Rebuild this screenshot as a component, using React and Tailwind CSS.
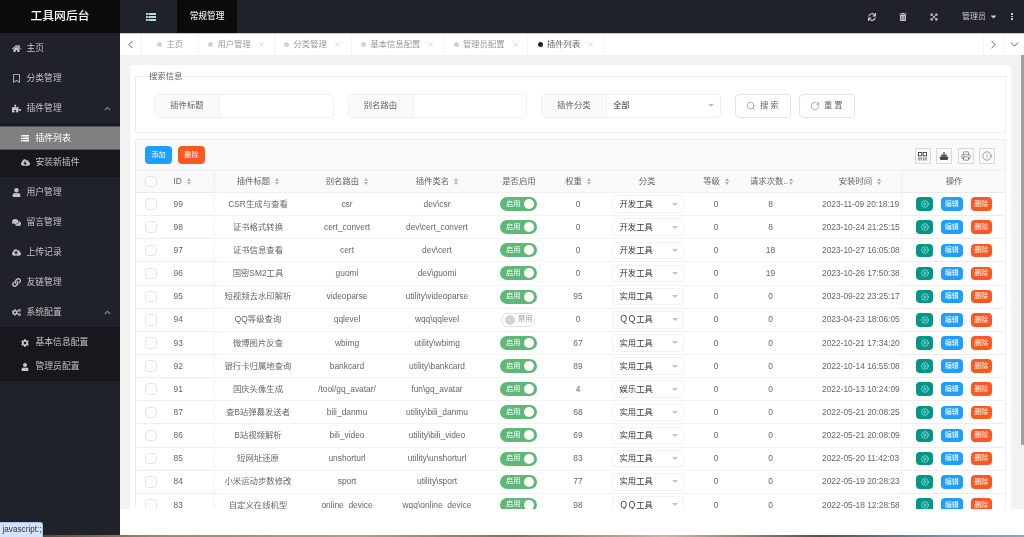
import React from "react";
import { FaHome, FaRegBookmark, FaPuzzlePiece, FaCloudDownloadAlt, FaUser, FaComments, FaCloudUploadAlt, FaLink, FaCogs, FaCog, FaSync, FaTrashAlt, FaExpandArrowsAlt, FaCaretDown, FaChevronUp } from "react-icons/fa";
import { ChevronLeft, ChevronRight, ChevronDown, Search, RotateCw, Printer, Info, CirclePlay, X } from "lucide-react";

const rows = [
  [99, "CSR生成与查看", "csr", "dev\\csr", 0, "开发工具", 8, "2023-11-09 20:18:19"],
  [98, "证书格式转换", "cert_convert", "dev\\cert_convert", 0, "开发工具", 8, "2023-10-24 21:25:15"],
  [97, "证书信息查看", "cert", "dev\\cert", 0, "开发工具", 18, "2023-10-27 16:05:08"],
  [96, "国密SM2工具", "guomi", "dev\\guomi", 0, "开发工具", 19, "2023-10-26 17:50:38"],
  [95, "短视频去水印解析", "videoparse", "utility\\videoparse", 95, "实用工具", 0, "2023-09-22 23:25:17"],
  [94, "QQ等级查询", "qqlevel", "wqq\\qqlevel", 0, "ＱＱ工具", 0, "2023-04-23 18:06:05", true],
  [93, "微博图片反查", "wbimg", "utility\\wbimg", 67, "实用工具", 0, "2022-10-21 17:34:20"],
  [92, "银行卡归属地查询", "bankcard", "utility\\bankcard", 89, "实用工具", 0, "2022-10-14 16:55:08"],
  [91, "国庆头像生成", "/tool/gq_avatar/", "fun\\gq_avatar", 4, "娱乐工具", 0, "2022-10-13 10:24:09"],
  [87, "查B站弹幕发送者", "bili_danmu", "utility\\bili_danmu", 68, "实用工具", 0, "2022-05-21 20:08:25"],
  [86, "B站视频解析", "bili_video", "utility\\bili_video", 69, "实用工具", 0, "2022-05-21 20:08:09"],
  [85, "短网址还原", "unshorturl", "utility\\unshorturl", 83, "实用工具", 0, "2022-05-20 11:42:03"],
  [84, "小米运动步数修改", "sport", "utility\\sport", 77, "实用工具", 0, "2022-05-19 20:28:23"],
  [83, "自定义在线机型", "online_device", "wqq\\online_device", 98, "ＱＱ工具", 0, "2022-05-18 12:28:58"],
];

const tabs = [
  ["主页", 57, false],
  ["用户管理", 76, true],
  ["分类管理", 77, true],
  ["基本信息配置", 92.5, true],
  ["管理员配置", 84, true],
  ["插件列表", 76, true, true],
];

function ListIcon({ size = 10 }) {
  return (
    <svg width={size} height={size * 0.8} viewBox="0 0 10 8" fill="currentColor">
      <path d="M0 0h1.8v2H0zM2.4 0H10v2H2.4zM0 3h1.8v2H0zM2.4 3H10v2H2.4zM0 6h1.8v2H0zM2.4 6H10v2H2.4z" />
    </svg>
  );
}

function MenuItem({ icon: Icon, label, open, size = 9 }) {
  return (
    <div className="flex h-[30px] items-center pl-3 pr-[9px] pt-px text-[8.8px] text-[#c3c4c6]">
      <span className="flex w-[14.5px] shrink-0 items-center"><Icon size={size} /></span>
      <span className="flex-1">{label}</span>
      {open && <FaChevronUp size={7} className="text-[#8b8d92]" />}
    </div>
  );
}

function SubItem({ icon: Icon, label, active, size = 8 }) {
  return (
    <div className={`flex h-6 items-center pl-[21px] pt-px text-[8.8px] ${active ? "border-y border-[#555] bg-[#808080] text-white" : "text-[#c3c4c6]"}`}>
      <span className="flex w-[14.5px] shrink-0 items-center"><Icon size={size} /></span>
      {label}
    </div>
  );
}

function Sort({ gap = "ml-[5px]" }) {
  return (
    <span className={`${gap} inline-flex flex-col gap-px align-middle`}>
      <span className="h-0 w-0 border-x-[2.5px] border-b-[3px] border-x-transparent border-b-[#b2b2b2]" />
      <span className="h-0 w-0 border-x-[2.5px] border-t-[3px] border-x-transparent border-t-[#b2b2b2]" />
    </span>
  );
}

function Field({ label, children }) {
  return (
    <div className="flex h-6 w-[179.5px] shrink-0 rounded-sm border border-[#f0f0f0] bg-white text-[8.4px]">
      <div className="flex w-[65px] shrink-0 items-center justify-center border-r border-[#f0f0f0] bg-[#fafafa] text-[#666]">{label}</div>
      {children}
    </div>
  );
}

function Head({ className, children, sort = true, gap }) {
  return (
    <div className={`flex h-full items-center justify-center whitespace-nowrap ${className}`}>
      {children}{sort && <Sort gap={gap} />}
    </div>
  );
}

function Row({ r }) {
  const [id, title, alias, cls, weight, cat, count, time, off] = r;
  return (
    <div className="flex h-[23.15px] items-center border-b border-[#f4f4f4] text-[8.4px] text-[#666]">
      <div className="relative z-10 flex h-full w-[77px] shrink-0 items-center pl-[9px] shadow-[2px_0_3px_rgba(0,0,0,0.04)]">
        <span className="h-[11.5px] w-[11.5px] rounded-sm border border-[#e4e4e4] bg-white" />
        <span className="ml-[17px]">{id}</span>
      </div>
      <div className="w-[90px] shrink-0 whitespace-nowrap text-center">{title}</div>
      <div className="w-[88px] shrink-0 whitespace-nowrap text-center">{alias}</div>
      <div className="w-[92px] shrink-0 whitespace-nowrap text-center">{cls}</div>
      <div className="flex w-[72px] shrink-0 justify-center pr-[2px]">
        {off ? (
          <span className="flex h-[14px] w-[34px] items-center rounded-full border border-[#e2e2e2] bg-white pl-[3px] text-[7.2px] text-[#999]">
            <span className="mr-[3px] h-[10px] w-[10px] rounded-full bg-[#d2d2d2]" />禁用
          </span>
        ) : (
          <span className="flex h-[14px] w-[37px] items-center justify-between rounded-full bg-[#5fb878] pl-[6.5px] pr-[3px] text-[7.2px] text-white">
            启用<span className="h-[10px] w-[10px] rounded-full bg-white" />
          </span>
        )}
      </div>
      <div className="w-[46px] shrink-0 text-center">{weight}</div>
      <div className="w-[92px] shrink-0 pl-[11px]">
        <div className="flex h-[17.5px] w-[72px] items-center justify-between rounded-sm border border-[#f2f2f2] bg-white pl-[6.5px] pr-[5px] text-[#333]">
          <span className="whitespace-nowrap">{cat}</span>
          <span className="h-0 w-0 border-x-[3px] border-t-[3px] border-x-transparent border-t-[#c2c2c2]" />
        </div>
      </div>
      <div className="w-[46px] shrink-0 text-center">0</div>
      <div className="w-[63px] shrink-0 text-center">{count}</div>
      <div className="w-[101px] shrink-0 whitespace-nowrap pl-[20px]">{time}</div>
      <div className="relative z-10 flex h-full flex-1 items-center bg-white pl-[13px] shadow-[-2px_0_3px_rgba(0,0,0,0.04)]">
        <span className="flex h-[13.5px] w-[17px] items-center justify-center rounded-sm bg-[#009688] text-white"><CirclePlay size={8} strokeWidth={1.5} /></span>
        <span className="ml-2 flex h-[13.5px] w-[21.5px] items-center justify-center rounded-sm bg-[#1e9fff] text-[7px] text-white">编辑</span>
        <span className="ml-2 flex h-[13.5px] w-[21.5px] items-center justify-center rounded-sm bg-[#ff5722] text-[7px] text-white">删除</span>
      </div>
    </div>
  );
}

function ToolBtn({ children }) {
  return <span className="flex h-4 w-4 items-center justify-center border border-[#d8d8d8] text-[#444]">{children}</span>;
}

export default function App() {
  return (
    <div className="relative flex h-[537px] w-[1024px] flex-col overflow-hidden bg-white font-['Liberation_Sans','Noto_Sans_CJK_SC',sans-serif] blur-[0.35px]">
      <div className="flex h-[535px]">
        <aside className="flex w-[120px] shrink-0 flex-col bg-[#20222a]">
          <div className="flex h-[33px] items-center justify-center bg-[#0b0b0b] text-[11.8px] font-medium text-white">工具网后台</div>
          <MenuItem icon={FaHome} label="主页" />
          <MenuItem icon={FaRegBookmark} label="分类管理" />
          <MenuItem icon={FaPuzzlePiece} label="插件管理" open />
          <div className="bg-[#16181d] py-[3px]">
            <SubItem icon={ListIcon} label="插件列表" active />
            <SubItem icon={FaCloudDownloadAlt} label="安装新插件" size={9} />
          </div>
          <MenuItem icon={FaUser} label="用户管理" />
          <MenuItem icon={FaComments} label="留言管理" />
          <MenuItem icon={FaCloudUploadAlt} label="上传记录" />
          <MenuItem icon={FaLink} label="友链管理" />
          <MenuItem icon={FaCogs} label="系统配置" open />
          <div className="bg-[#16181d] py-[3px]">
            <SubItem icon={FaCog} label="基本信息配置" />
            <SubItem icon={FaUser} label="管理员配置" />
          </div>
        </aside>

        <main className="flex min-w-0 flex-1 flex-col">
          <header className="flex h-[33px] shrink-0 items-center bg-[#20222a] text-[#c9cacc]">
            <span className="flex w-[57px] justify-center pl-[4px] text-[#b9dcd8]"><ListIcon size={10} /></span>
            <span className="flex h-full w-[60px] items-center justify-center bg-[#0b0b0b] text-[8.7px] font-medium text-[#e8e8e8]">常规管理</span>
            <div className="ml-auto flex items-center pr-[11px]">
              <FaSync size={8} />
              <FaTrashAlt size={8} className="ml-[23px]" />
              <FaExpandArrowsAlt size={8} className="ml-[23px]" />
              <span className="ml-[24.5px] text-[8px]">管理员</span>
              <FaCaretDown size={9} className="ml-[3px]" />
              <span className="ml-[13px] flex flex-col gap-px">
                <i className="h-[1.5px] w-[2px] bg-[#c9cacc]" />
                <i className="h-[1.5px] w-[2px] bg-[#c9cacc]" />
                <i className="h-[1.5px] w-[2px] bg-[#c9cacc]" />
              </span>
            </div>
          </header>

          <nav className="flex h-[22px] shrink-0 items-center border-t border-[#c6c8cc] bg-white text-[8.3px] text-[#999]">
            <span className="flex h-full w-[21.5px] shrink-0 items-center justify-center border-r border-[#f4f4f4] text-[#444]"><ChevronLeft size={13} strokeWidth={1.6} /></span>
            {tabs.map(([t, w, close, active]) => (
              <div key={t} style={{ width: w }} className={`flex h-full shrink-0 items-center whitespace-nowrap border-r border-[#f4f4f4] ${close ? "pl-[9.5px]" : "pl-[15.5px]"}`}>
                <span className={`mr-[4.5px] h-[5px] w-[5px] rounded-full ${active ? "bg-[#20222a]" : "bg-[#d2d2d2]"}`} />
                <span className={active ? "text-[#666]" : ""}>{t}</span>
                {close && <X size={7} strokeWidth={1.5} className="ml-[7px] text-[#aaa]" />}
              </div>
            ))}
            <span className="ml-auto flex h-full w-[21px] items-center justify-center border-l border-[#f4f4f4] text-[#444]"><ChevronRight size={13} strokeWidth={1.6} /></span>
            <span className="flex h-full w-[20.5px] items-center justify-center border-l border-[#f4f4f4] text-[#444]"><ChevronDown size={13} strokeWidth={1.6} /></span>
          </nav>

          <div className="flex h-[454px] shrink-0">
            <div className="min-w-0 flex-1 overflow-hidden bg-[#f2f2f2] pl-[10px] pr-[10px] pt-[10px]">
              <div className="h-[600px] rounded-sm bg-white px-[5px] pt-[6px]">
                <fieldset className="h-[61.5px] border border-[#eee] pl-[12px]">
                  <legend className="px-[1px] text-[8.4px] leading-[10px] text-[#666]">搜索信息</legend>
                  <div className="mt-[12.5px] flex items-center pl-[6px]">
                    <Field label="插件标题" />
                    <div className="ml-[14px]"><Field label="别名路由" /></div>
                    <div className="ml-[14px]">
                      <Field label="插件分类">
                        <div className="flex flex-1 items-center justify-between pl-[6px] pr-[6px] text-[#333]">
                          全部
                          <span className="h-0 w-0 border-x-[3px] border-t-[3px] border-x-transparent border-t-[#c2c2c2]" />
                        </div>
                      </Field>
                    </div>
                    <span className="ml-[14px] flex h-6 w-[56px] items-center justify-center rounded-sm border border-[#e4e4e4] pl-[2px] text-[8.4px] tracking-[2px] text-[#666]"><Search size={10} className="mr-[3.5px]" strokeWidth={1.2} />搜索</span>
                    <span className="ml-2 flex h-6 w-[56px] items-center justify-center rounded-sm border border-[#e4e4e4] pl-[2px] text-[8.4px] tracking-[2px] text-[#666]"><RotateCw size={10} className="mr-[3.5px]" strokeWidth={1.2} />重置</span>
                  </div>
                </fieldset>

                <div className="mt-[6.5px] border border-b-0 border-[#eee]">
                  <div className="flex h-[31px] items-center border-b border-[#f0f0f0] bg-[#fafafa] pl-[9px] pr-[10px]">
                    <span className="flex h-[18px] w-[27px] items-center justify-center rounded-sm bg-[#1e9fff] text-[7.2px] text-white">添加</span>
                    <span className="ml-[6px] flex h-[18px] w-[27px] items-center justify-center rounded-sm bg-[#ff5722] text-[7.2px] text-white">删除</span>
                    <div className="ml-auto flex gap-[5.5px] pt-[2px]">
                      <ToolBtn>
                        <svg width="9" height="9" viewBox="0 0 9 9" fill="none" stroke="currentColor" strokeWidth="0.9"><rect x="0.5" y="0.5" width="3.3" height="3.3" /><rect x="5.2" y="0.5" width="3.3" height="3.3" /><path d="M1 5.2v3.3M3.2 5.2v3.3M5.8 5.2v3.3M8 5.2v3.3" /></svg>
                      </ToolBtn>
                      <ToolBtn>
                        <svg width="10" height="10" viewBox="0 0 10 10" fill="currentColor"><path d="M4.4 1h1.2v2.2h-1.2zM2.6 3.4h4.8l.6 2H2zM.5 5.8h9l-.9 3.2H1.4z" /></svg>
                      </ToolBtn>
                      <ToolBtn><Printer size={10} strokeWidth={1.3} /></ToolBtn>
                      <ToolBtn><Info size={10} strokeWidth={1.2} /></ToolBtn>
                    </div>
                  </div>

                  <div className="flex h-[22px] items-center border-b border-[#f0f0f0] bg-[#fafafa] text-[8.4px] text-[#666]">
                    <div className="relative z-10 flex h-full w-[77px] shrink-0 items-center pl-[9px] shadow-[2px_0_3px_rgba(0,0,0,0.04)]">
                      <span className="h-[11.5px] w-[11.5px] rounded-sm border border-[#e4e4e4] bg-white" />
                      <span className="ml-[17px]">ID</span><Sort />
                    </div>
                    <Head className="w-[90px] shrink-0">插件标题</Head>
                    <Head className="w-[88px] shrink-0">别名路由</Head>
                    <Head className="w-[92px] shrink-0">插件类名</Head>
                    <Head className="w-[72px] shrink-0" sort={false}>是否启用</Head>
                    <Head className="w-[46px] shrink-0">权重</Head>
                    <Head className="w-[92px] shrink-0" sort={false}>分类</Head>
                    <Head className="w-[46px] shrink-0">等级</Head>
                    <Head className="w-[63px] shrink-0 pl-[2px]" gap="ml-px">请求次数..</Head>
                    <Head className="w-[101px] shrink-0 pl-[15px]">安装时间</Head>
                    <div className="relative z-10 flex h-full flex-1 items-center justify-center bg-[#fafafa] shadow-[-2px_0_3px_rgba(0,0,0,0.04)]">操作</div>
                  </div>

                  {rows.map((r) => <Row key={r[0]} r={r} />)}
                </div>
              </div>
            </div>
            <div className="flex w-[3px] shrink-0 flex-col bg-[#f1f1f1]">
              <div className="h-[390px] bg-[#a0a0a0]" />
            </div>
          </div>
          <div className="flex-1 bg-white" />
        </main>
      </div>
      <div className="h-[2px] bg-[linear-gradient(90deg,#3a3430_0%,#a08468_15%,#b59d84_35%,#8a7058_50%,#c9b7a2_65%,#5c5048_80%,#6f93ad_92%,#86a8bf_100%)]" />
      <div className="absolute bottom-0 left-0 flex h-[15px] w-[43px] items-center rounded-tr-[3px] border-r border-t border-[#a9c4ea] bg-[#d3e3fb] pl-[2.5px] text-[8.2px] text-[#333]">javascript:;</div>
    </div>
  );
}
